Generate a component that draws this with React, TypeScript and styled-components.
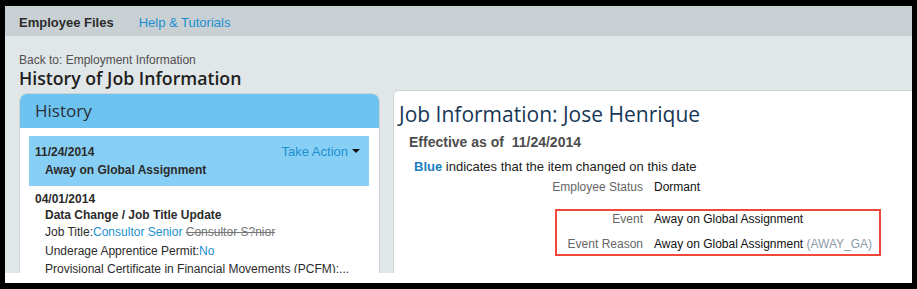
import { FC } from "react";
import styled, { createGlobalStyle } from "styled-components";

const GlobalStyle = createGlobalStyle`
  html, body {
    margin: 0;
    padding: 0;
    background: #000;
  }
  * {
    box-sizing: border-box;
  }
`;

// black screenshot frame round the page
const Frame = styled.div`
  width: 917px;
  height: 289px;
  background: #000;
  padding: 6px 5px 6px 5px;
`;

const Screen = styled.div`
  height: 100%;
  background: #fff;
`;

const Page = styled.div`
  height: 267px;
  overflow: hidden;
  background: #e1e6e9;
  font-family: "Liberation Sans", Arial, sans-serif;
`;

const NavBar = styled.div`
  height: 30px;
  background: #c8d0d4;
  display: flex;
  align-items: center;
  gap: 25px;
  padding: 3px 0 0 14px;
  font-size: 13px;
`;

const NavItem = styled.span<{ $active?: boolean }>`
  color: ${(p) => (p.$active ? "#2b2b2b" : "#1a8fd0")};
  font-weight: ${(p) => (p.$active ? 700 : 400)};
`;

const PageHead = styled.div`
  padding: 17px 14px 0 14px;
`;

const BackLink = styled.div`
  font-size: 12px;
  line-height: 14px;
  color: #505050;
`;

const PageTitle = styled.h1`
  margin: 0;
  font-family: "Open Sans", sans-serif;
  font-weight: 600;
  font-size: 17.7px;
  line-height: 22px;
  color: #1e1e1e;
`;

const Columns = styled.div`
  display: flex;
  align-items: flex-start;
  gap: 13px;
  padding-left: 14px;
  margin-top: 1px;
`;

const HistoryPanel = styled.div`
  width: 361px;
  flex-shrink: 0;
  margin-top: 3px;
  background: #fff;
  border: 1px solid #cdd4d8;
  border-radius: 8px 8px 0 0;
  overflow: hidden;
  height: 200px;
`;

const PanelHeader = styled.div`
  height: 34px;
  background: #6cc3f0;
  padding-left: 15px;
  font-family: "Open Sans", sans-serif;
  font-size: 17px;
  line-height: 34px;
  color: #2a2f36;
`;

const PanelBody = styled.div`
  padding: 8px 10px 0 9px;
`;

const HistoryItem = styled.div<{ $selected?: boolean }>`
  background: ${(p) => (p.$selected ? "#88cff5" : "transparent")};
  padding: ${(p) => (p.$selected ? "8px 9px 7px 6px" : "5px 9px 0 6px")};
  color: #2b2b2b;
  font-size: 12px;
`;

const ItemTop = styled.div`
  display: flex;
  justify-content: space-between;
  align-items: center;
  height: 16px;
`;

const ItemDate = styled.div`
  font-weight: 700;
  line-height: 16px;
`;

const ActionLink = styled.span`
  display: flex;
  align-items: center;
  font-size: 13px;
  color: #1a8fd0;
  margin-top: -2px;
`;

const Caret = styled.span`
  width: 0;
  height: 0;
  margin-left: 4px;
  border-left: 4px solid transparent;
  border-right: 4px solid transparent;
  border-top: 4px solid #111;
`;

const ItemTitle = styled.div<{ $loose?: boolean }>`
  font-weight: 700;
  padding-left: 10px;
  line-height: ${(p) => (p.$loose ? "18px" : "16px")};
  margin-top: ${(p) => (p.$loose ? "1px" : "0")};
`;

const ChangeLine = styled.div`
  padding-left: 10px;
  line-height: 18.5px;
  white-space: nowrap;
`;

const NewValue = styled.span`
  color: #1a8fd0;
`;

const OldValue = styled.span`
  color: #777;
  text-decoration: line-through;
`;

const DetailPanel = styled.div`
  flex: 1;
  margin-right: -12px;
  height: 200px;
  background: #fff;
  border: 1px solid #cdd4d8;
  border-radius: 6px 0 0 0;
  padding: 9px 0 0 5px;
`;

const DetailTitle = styled.h2`
  margin: 0;
  font-family: "Open Sans", sans-serif;
  font-weight: 400;
  font-size: 21px;
  line-height: 28px;
  color: #173756;
`;

const Effective = styled.div`
  margin-top: 5px;
  padding-left: 10px;
  font-size: 14px;
  font-weight: 700;
  line-height: 18px;
  color: #4d4d4d;
  white-space: pre;
`;

const Legend = styled.div`
  margin-top: 7px;
  padding-left: 15px;
  font-size: 13px;
  line-height: 18px;
  color: #222;

  b {
    color: #1a7fc0;
  }
`;

const FieldRow = styled.div<{ $labelWidth: number }>`
  display: grid;
  grid-template-columns: ${(p) => p.$labelWidth}px auto;
  column-gap: 11px;
  font-size: 12px;
  line-height: 17px;
  white-space: nowrap;
`;

const FieldLabel = styled.span`
  text-align: right;
  color: #666;
`;

const FieldValue = styled.span`
  color: #111;

  small {
    font-size: 12px;
    color: #8b9aa6;
  }
`;

const StatusRows = styled.div`
  margin-top: 3px;
`;

// red annotation box drawn over the screenshot
const Highlight = styled.div`
  margin: 13px 0 0 156px;
  width: 326px;
  border: 2px solid #f0473b;
  padding: 0 0 1px 0;
  display: flex;
  flex-direction: column;
  gap: 8px;
`;

const App: FC = () => {
  return (
    <Frame>
      <GlobalStyle />
      <Screen>
        <Page>
          <NavBar>
            <NavItem $active>Employee Files</NavItem>
            <NavItem>Help &amp; Tutorials</NavItem>
          </NavBar>

          <PageHead>
            <BackLink>Back to: Employment Information</BackLink>
            <PageTitle>History of Job Information</PageTitle>
          </PageHead>

          <Columns>
            <HistoryPanel>
              <PanelHeader>History</PanelHeader>
              <PanelBody>
                <HistoryItem $selected>
                  <ItemTop>
                    <ItemDate>11/24/2014</ItemDate>
                    <ActionLink>
                      Take Action
                      <Caret />
                    </ActionLink>
                  </ItemTop>
                  <ItemTitle $loose>Away on Global Assignment</ItemTitle>
                </HistoryItem>

                <HistoryItem>
                  <ItemDate>04/01/2014</ItemDate>
                  <ItemTitle>Data Change / Job Title Update</ItemTitle>
                  <ChangeLine>
                    Job Title:<NewValue>Consultor Senior</NewValue>{" "}
                    <OldValue>Consultor S?nior</OldValue>
                  </ChangeLine>
                  <ChangeLine>
                    Underage Apprentice Permit:<NewValue>No</NewValue>
                  </ChangeLine>
                  <ChangeLine>
                    Provisional Certificate in Financial Movements (PCFM):...
                  </ChangeLine>
                </HistoryItem>
              </PanelBody>
            </HistoryPanel>

            <DetailPanel>
              <DetailTitle>Job Information: Jose Henrique</DetailTitle>
              <Effective>Effective as of  11/24/2014</Effective>
              <Legend>
                <b>Blue</b> indicates that the item changed on this date
              </Legend>
              <StatusRows>
                <FieldRow $labelWidth={244}>
                  <FieldLabel>Employee Status</FieldLabel>
                  <FieldValue>Dormant</FieldValue>
                </FieldRow>
              </StatusRows>
              <Highlight>
                <FieldRow $labelWidth={86}>
                  <FieldLabel>Event</FieldLabel>
                  <FieldValue>Away on Global Assignment</FieldValue>
                </FieldRow>
                <FieldRow $labelWidth={86}>
                  <FieldLabel>Event Reason</FieldLabel>
                  <FieldValue>
                    Away on Global Assignment <small>(AWAY_GA)</small>
                  </FieldValue>
                </FieldRow>
              </Highlight>
            </DetailPanel>
          </Columns>
        </Page>
      </Screen>
    </Frame>
  );
};

export default App;
